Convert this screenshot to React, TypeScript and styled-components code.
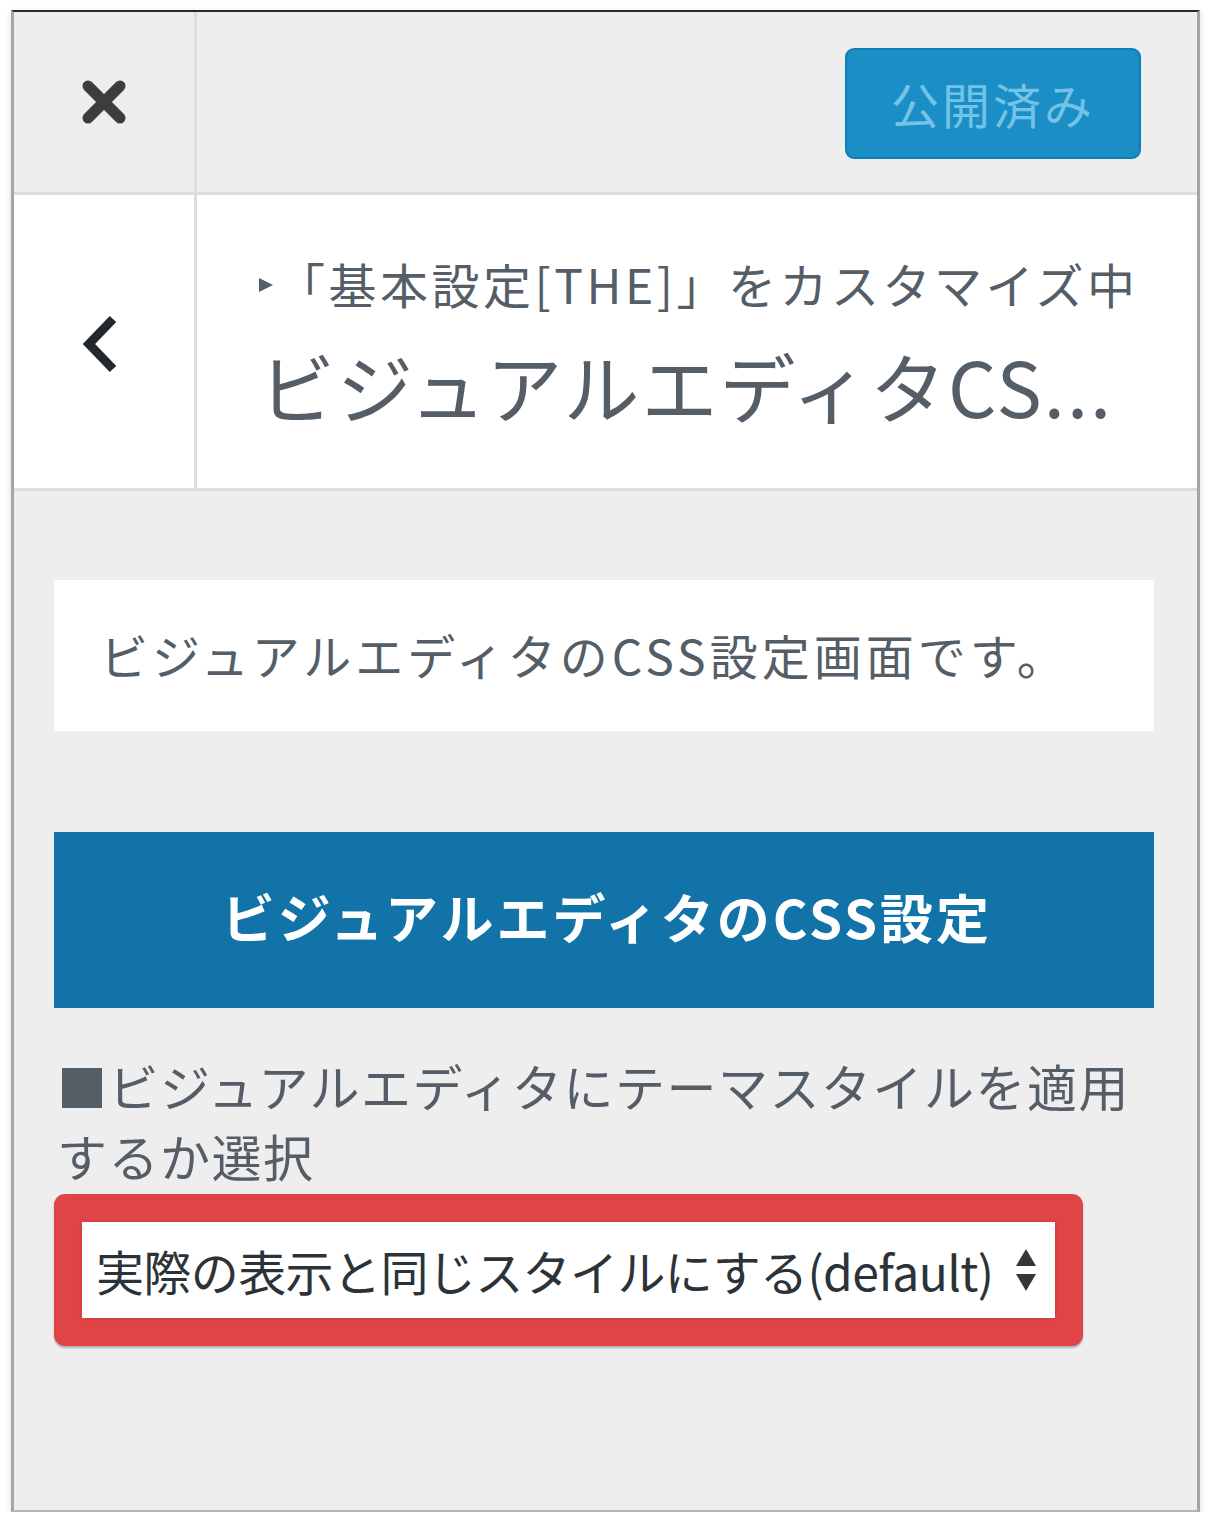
import React from "react";
import styled, { createGlobalStyle } from "styled-components";

const GlobalStyle = createGlobalStyle`
  html, body {
    margin: 0;
    padding: 0;
    background: #fff;
  }
  body {
    font-family: "Noto Sans CJK JP", "Noto Sans", sans-serif;
  }
`;

const Page = styled.div`
  padding: 10px 0 0 11px;
`;

const Frame = styled.div`
  width: 1183px;
  height: 1498px;
  background: #eee;
  border: 3px solid #a5a5a5;
  border-top: 2px solid #2a2a2a;
  border-bottom: 2px solid #b5b5b5;
  box-shadow: 0 2px 6px rgba(0, 0, 0, 0.15);
  display: flex;
  flex-direction: column;
  overflow: hidden;
`;

const TopBar = styled.header`
  display: flex;
  align-items: stretch;
  height: 180px;
  border-bottom: 3px solid #ddd;
  background: #eee;
`;

const IconCell = styled.div<{ $bg?: string }>`
  width: 180px;
  flex-shrink: 0;
  display: flex;
  align-items: center;
  justify-content: center;
  border-right: 3px solid #ddd;
  background: ${(p) => p.$bg || "transparent"};
`;

const TopActions = styled.div`
  flex: 1;
  display: flex;
  justify-content: flex-end;
  align-items: center;
  padding-right: 56px;
`;

const PublishButton = styled.button`
  width: 296px;
  height: 111px;
  margin-top: 2px;
  border: 2px solid #0f7eb5;
  border-radius: 9px;
  background: #1a8ec5;
  color: #72c3e6;
  font-family: "Noto Sans CJK JP", sans-serif;
  font-size: 48px;
  letter-spacing: 3px;
  cursor: default;
`;

const TitleBar = styled.div`
  display: flex;
  height: 293px;
  background: #fff;
  border-bottom: 3px solid #ddd;
`;

const TitleText = styled.div`
  flex: 1;
  display: flex;
  flex-direction: column;
  padding: 58px 0 0 62px;
  color: #555d66;
  overflow: hidden;
`;

const Breadcrumb = styled.div`
  font-size: 48px;
  line-height: 60px;
  letter-spacing: 3.5px;
  white-space: nowrap;
  display: flex;
  align-items: center;
`;

const Arrow = styled.span`
  display: inline-block;
  width: 0;
  height: 0;
  border-top: 7px solid transparent;
  border-bottom: 7px solid transparent;
  border-left: 14px solid #555d66;
  margin: 4px 4px 0 0;
`;

const Heading = styled.h2`
  margin: 22px 0 0;
  font-size: 76px;
  font-weight: 400;
  line-height: 100px;
  letter-spacing: 2px;
  white-space: nowrap;
`;

const Body = styled.main`
  padding: 89px 0 0 40px;
  display: flex;
  flex-direction: column;
  align-items: flex-start;
`;

const Description = styled.div`
  width: 1100px;
  height: 151px;
  box-sizing: border-box;
  background: #fff;
  padding: 0 0 4px 46px;
  display: flex;
  align-items: center;
  color: #555d66;
  font-size: 48px;
  letter-spacing: 4px;
  white-space: nowrap;
`;

const Banner = styled.h3`
  width: 1100px;
  height: 176px;
  margin: 101px 0 0;
  background: #1273a8;
  color: #fff;
  display: flex;
  align-items: center;
  justify-content: center;
  font-size: 53px;
  font-weight: 700;
  letter-spacing: 3px;
  padding: 0 0 8px 6px;
  box-sizing: border-box;
`;

const Label = styled.p`
  width: 1100px;
  margin: 42px 0 0;
  padding-left: 3px;
  box-sizing: border-box;
  color: #555d66;
  font-size: 50px;
  line-height: 70px;
  letter-spacing: 1.5px;
`;

const Highlight = styled.div`
  margin-top: 4px;
  width: 1029px;
  height: 152px;
  box-sizing: border-box;
  padding: 28px;
  background: #df4447;
  border-radius: 11px;
  box-shadow: 0 2px 2px rgba(0, 0, 0, 0.25);
`;

const SelectBox = styled.div`
  height: 96px;
  background: #fff;
  box-shadow: 0 0 3px rgba(0, 0, 0, 0.15);
  display: flex;
  align-items: center;
  padding: 0 18px 0 14px;
  color: #2c3338;
  font-size: 48px;
  white-space: nowrap;
`;

const SelectText = styled.span`
  flex: 1;
  min-width: 0;
  overflow: hidden;
  letter-spacing: -0.6px;
`;

const CloseIcon = () => (
  <svg width="46" height="46" viewBox="0 0 46 46">
    <path
      d="M7 7 L39 39 M39 7 L7 39"
      stroke="#3d3d3d"
      strokeWidth="11"
      strokeLinecap="round"
    />
  </svg>
);

const BackIcon = () => (
  <svg width="40" height="58" viewBox="0 0 40 58" style={{ marginRight: 6, marginTop: 4 }}>
    <path
      d="M32 4 L8 29 L32 54"
      stroke="#23282d"
      strokeWidth="9"
      fill="none"
      strokeLinejoin="miter"
    />
  </svg>
);

const UpDown = () => (
  <svg width="22" height="46" viewBox="0 0 22 46" style={{ flexShrink: 0 }}>
    <path d="M11 2 L21 19 L1 19 Z" fill="#32373c" />
    <path d="M1 27 L21 27 L11 44 Z" fill="#32373c" />
  </svg>
);

const App: React.FC = () => {
  return (
    <Page>
      <GlobalStyle />
      <Frame>
        <TopBar>
          <IconCell>
            <CloseIcon />
          </IconCell>
          <TopActions>
            <PublishButton>公開済み</PublishButton>
          </TopActions>
        </TopBar>
        <TitleBar>
          <IconCell $bg="#fff">
            <BackIcon />
          </IconCell>
          <TitleText>
            <Breadcrumb>
              <Arrow />
              「基本設定[THE]」をカスタマイズ中
            </Breadcrumb>
            <Heading>ビジュアルエディタCS...</Heading>
          </TitleText>
        </TitleBar>
        <Body>
          <Description>ビジュアルエディタのCSS設定画面です。</Description>
          <Banner>ビジュアルエディタのCSS設定</Banner>
          <Label>■ビジュアルエディタにテーマスタイルを適用するか選択</Label>
          <Highlight>
            <SelectBox>
              <SelectText>実際の表示と同じスタイルにする(default)</SelectText>
              <UpDown />
            </SelectBox>
          </Highlight>
        </Body>
      </Frame>
    </Page>
  );
};

export default App;
